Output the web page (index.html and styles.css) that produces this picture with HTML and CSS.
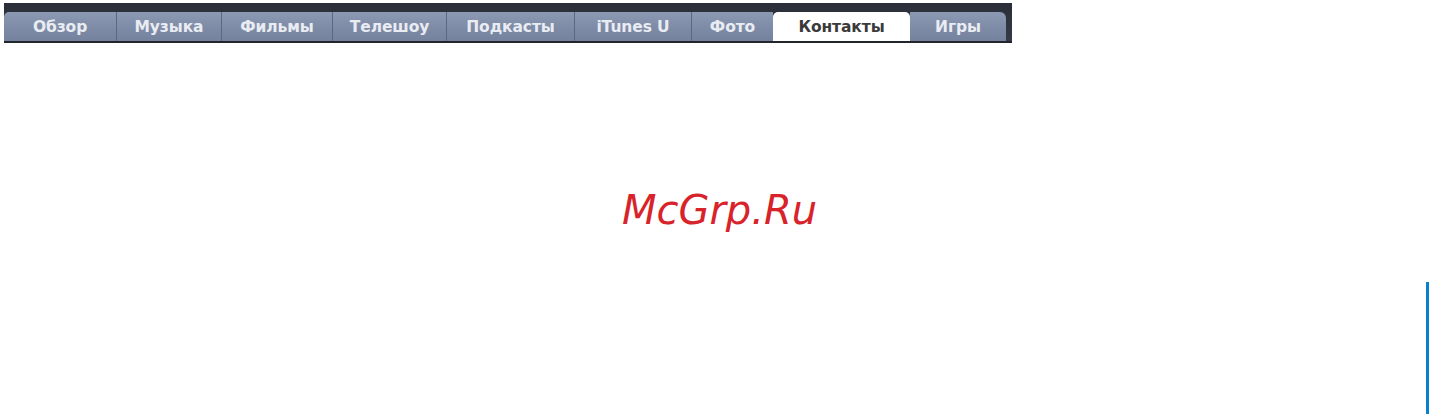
FILE: index.html
```html
<!DOCTYPE html>
<html lang="ru">
<head>
<meta charset="utf-8">
<title>Контакты</title>
<link rel="stylesheet" href="styles.css">
</head>
<body>
<div class="page">
  <nav class="tabbar">
    <div class="tabs">
      <div class="tab t1">Обзор</div>
      <div class="tab t2">Музыка</div>
      <div class="tab t3">Фильмы</div>
      <div class="tab t4">Телешоу</div>
      <div class="tab t5">Подкасты</div>
      <div class="tab t6">iTunes U</div>
      <div class="tab t7">Фото</div>
      <div class="tab t8 active">Контакты</div>
      <div class="tab t9">Игры</div>
    </div>
  </nav>
  <div class="watermark">McGrp.Ru</div>
  <div class="edge"></div>
</div>
</body>
</html>
```
FILE: styles.css
```css
html, body {
  margin: 0;
  padding: 0;
  background: #ffffff;
}
.page {
  position: relative;
  width: 1429px;
  height: 414px;
  overflow: hidden;
}
.tabbar {
  margin: 3px 0 0 4px;
  width: 1008px;
  height: 40px;
  background: linear-gradient(#2a2e38, #353a47);
  box-sizing: border-box;
  padding-top: 9px;
  border-bottom: 2px solid #22252c;
}
.tabs {
  display: flex;
  height: 29px;
}
.tab {
  height: 29px;
  box-sizing: border-box;
  display: flex;
  align-items: center;
  justify-content: center;
  font-family: "DejaVu Sans", sans-serif;
  font-weight: bold;
  font-size: 15.5px;
  letter-spacing: -0.1px;
  color: #e9ecf2;
  background: linear-gradient(#8c99b3, #7d8aa5 60%, #75829d);
  border-right: 1px solid #5d6780;
  padding-top: 1px;
}
.t1 { width: 113px; border-top-left-radius: 5px; }
.t2 { width: 105px; }
.t3 { width: 111px; }
.t4 { width: 114px; }
.t5 { width: 128px; }
.t6 { width: 117px; }
.t7 { width: 81px; border-right: none; }
.t8 { width: 137px; }
.t9 { width: 96px; border-top-right-radius: 6px; border-right: none; }
.tab.active {
  background: #ffffff;
  color: #3a3a3a;
  border-top-left-radius: 5px;
  border-top-right-radius: 5px;
  border-right: none;
}
.watermark {
  margin-top: 143px;
  text-align: center;
  padding-left: 10px;
  font-family: "DejaVu Sans", sans-serif;
  font-style: oblique;
  font-size: 40px;
  color: #d8232a;
  line-height: 48px;
}
.edge {
  position: absolute;
  left: 1426px;
  top: 282px;
  width: 3px;
  height: 132px;
  background: #0a7fd0;
}
```
